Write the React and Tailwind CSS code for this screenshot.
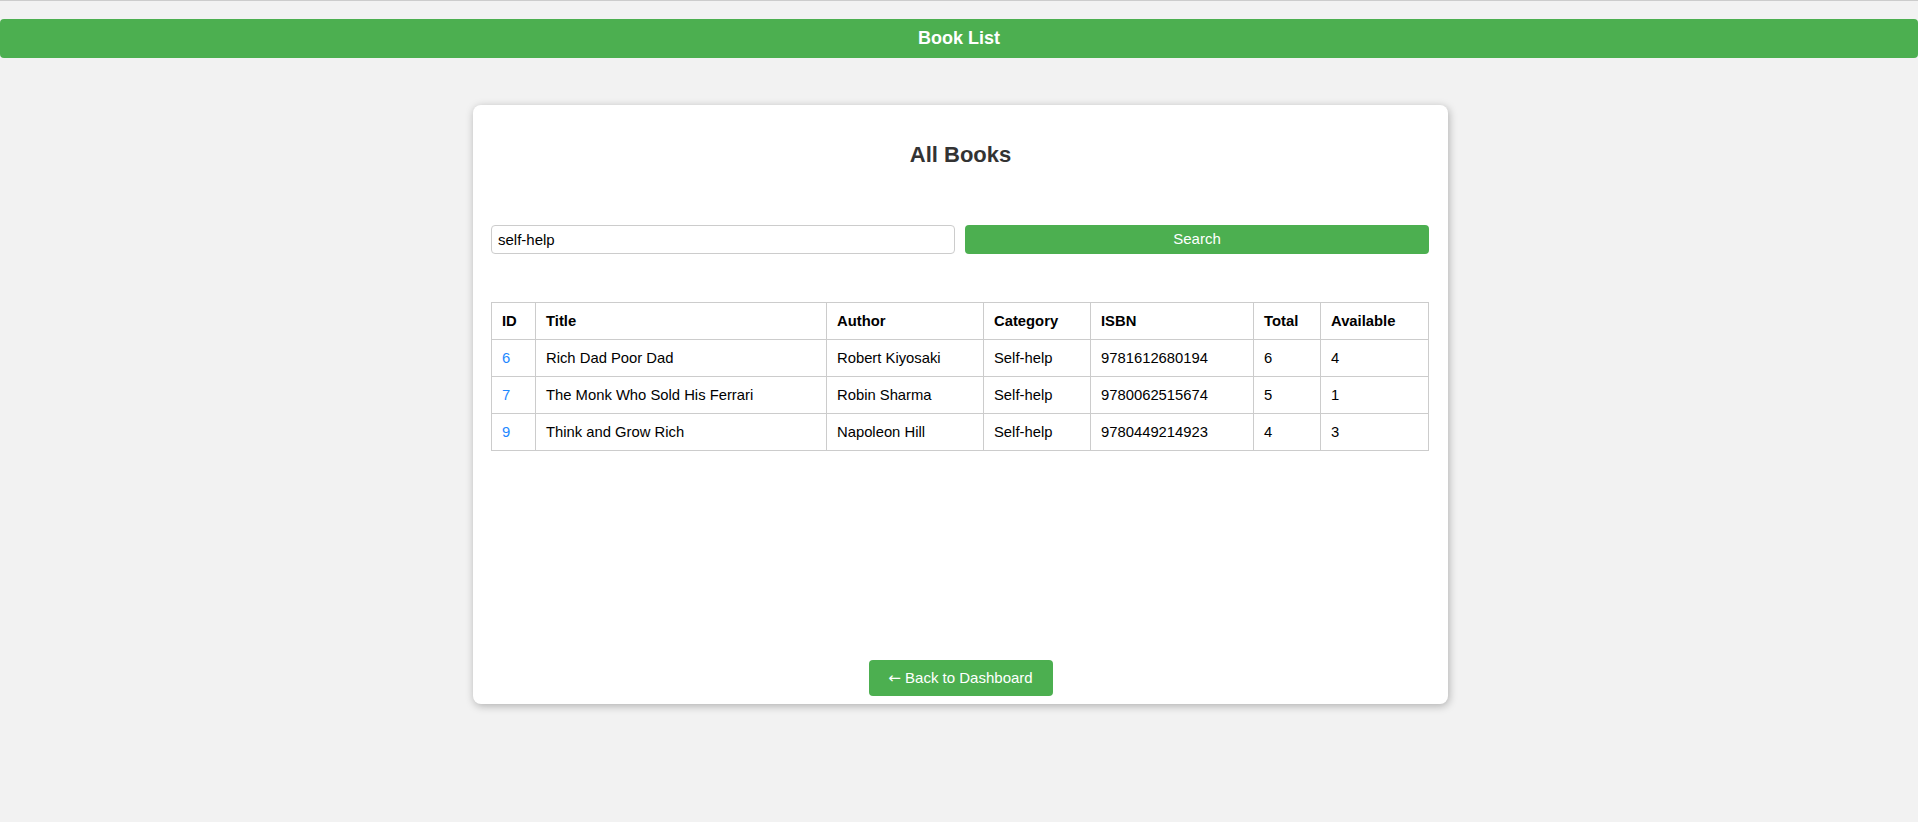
import React from "react";

const books = [
  { id: 6, title: "Rich Dad Poor Dad", author: "Robert Kiyosaki", category: "Self-help", isbn: "9781612680194", total: 6, available: 4 },
  { id: 7, title: "The Monk Who Sold His Ferrari", author: "Robin Sharma", category: "Self-help", isbn: "9780062515674", total: 5, available: 1 },
  { id: 9, title: "Think and Grow Rich", author: "Napoleon Hill", category: "Self-help", isbn: "9780449214923", total: 4, available: 3 },
];

const cols = [
  { label: "ID", w: "w-[44px]" },
  { label: "Title", w: "w-[291px]" },
  { label: "Author", w: "w-[157px]" },
  { label: "Category", w: "w-[107px]" },
  { label: "ISBN", w: "w-[163px]" },
  { label: "Total", w: "w-[67px]" },
  { label: "Available", w: "w-[108px]" },
];

const cell = "border border-[#cccccc] h-[37px] px-[10px] text-left align-middle";

export default function App() {
  return (
    <div className="min-h-screen bg-[#f2f2f2] border-t border-[#cccccc] pt-[18px] font-['Liberation_Sans',Arial,sans-serif]">
      {/* header */}
      <header className="h-[39px] bg-[#4caf50] rounded-[4px] flex items-center justify-center text-white font-bold text-[18px]">
        Book List
      </header>

      {/* card */}
      <div className="pl-[3px]">
        <div className="mt-[47px] mx-auto w-[975px] h-[599px] bg-white rounded-[8px] shadow-[1px_2px_8px_rgba(0,0,0,0.28)] flex flex-col px-[18px] pb-[8px]">
          <h2 className="pt-[37px] text-center text-[22px] leading-[26px] font-bold text-[#333333]">All Books</h2>

          <div className="mt-[57px] flex gap-[10px]">
            <input
              defaultValue="self-help"
              className="w-[464px] h-[29px] border border-[#cccccc] rounded-[4px] px-[6px] text-[15px] text-black outline-none"
            />
            <button className="w-[464px] h-[29px] bg-[#4caf50] rounded-[4px] text-white text-[15px]">Search</button>
          </div>

          <table className="mt-[48px] w-[937px] table-fixed border-collapse text-[14.8px] text-black">
            <thead>
              <tr>
                {cols.map((c) => (
                  <th key={c.label} className={`${cell} ${c.w} font-bold`}>{c.label}</th>
                ))}
              </tr>
            </thead>
            <tbody>
              {books.map((b) => (
                <tr key={b.id}>
                  <td className={`${cell} text-[#1e88ff]`}>{b.id}</td>
                  <td className={cell}>{b.title}</td>
                  <td className={cell}>{b.author}</td>
                  <td className={cell}>{b.category}</td>
                  <td className={cell}>{b.isbn}</td>
                  <td className={cell}>{b.total}</td>
                  <td className={cell}>{b.available}</td>
                </tr>
              ))}
            </tbody>
          </table>

          <div className="mt-auto flex justify-center">
            <button className="w-[184px] h-[36px] bg-[#4caf50] rounded-[4px] text-white text-[15px]">
              <span className="font-['DejaVu_Sans',sans-serif]">←</span> Back to Dashboard
            </button>
          </div>
        </div>
      </div>
    </div>
  );
}
